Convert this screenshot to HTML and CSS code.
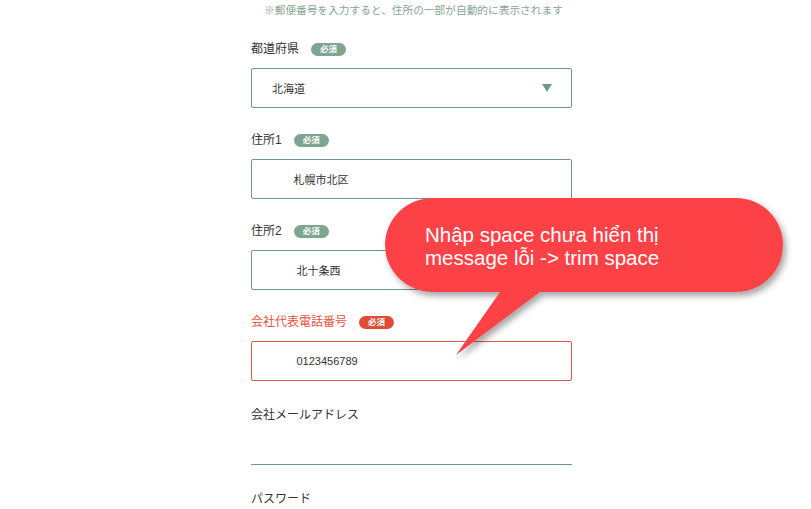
FILE: index.html
```html
<!DOCTYPE html>
<html lang="ja">
<head>
  <meta charset="UTF-8">
  <meta name="viewport" content="width=device-width, initial-scale=1.0">
  <title>会社情報の登録</title>
  <link rel="stylesheet" href="styles.css">
</head>
<body>
  <form class="form">
    <p class="hint">※郵便番号を入力すると、住所の一部が自動的に表示されます</p>

    <div class="field">
      <div class="label-row"><span class="label">都道府県</span><span class="badge">必須</span></div>
      <div class="select">
        <span>北海道</span>
        <span class="arrow"></span>
      </div>
    </div>

    <div class="field">
      <div class="label-row"><span class="label">住所1</span><span class="badge">必須</span></div>
      <input class="input" type="text" value="       札幌市北区">
    </div>

    <div class="field">
      <div class="label-row"><span class="label">住所2</span><span class="badge">必須</span></div>
      <input class="input" type="text" value="        北十条西">
    </div>

    <div class="field error">
      <div class="label-row"><span class="label">会社代表電話番号</span><span class="badge">必須</span></div>
      <input class="input" type="text" value="        0123456789">
    </div>

    <div class="field mail">
      <div class="label-row"><span class="label">会社メールアドレス</span></div>
      <input class="input line" type="text" value="">
    </div>

    <div class="field">
      <div class="label-row"><span class="label">パスワード</span></div>
    </div>
  </form>

  <!-- 注釈の吹き出し -->
  <svg class="callout" width="420" height="180" viewBox="380 190 420 180">
    <defs>
      <filter id="shadow" x="-10%" y="-20%" width="130%" height="150%">
        <feDropShadow dx="3" dy="4" stdDeviation="3" flood-color="#000" flood-opacity="0.35"/>
      </filter>
    </defs>
    <path filter="url(#shadow)" fill="#fd4346"
      d="M433 198 H736 A47 47 0 0 1 736 292 H540 L456 355 L500 292 H433 A48 47 0 0 1 433 198 Z"/>
    <text x="425" y="242" class="callout-text">Nhập space chưa hiển thị</text>
    <text x="425" y="265" class="callout-text">message lỗi -&gt; trim space</text>
  </svg>
</body>
</html>
```

FILE: styles.css
```css
body { margin: 0; background: #fff; font-family: "Liberation Sans", "Noto Sans CJK JP", sans-serif; color: #333; }
.form { margin-left: 251px; width: 321px; }
.hint { margin: 0 0 18px 13px; font-size: 10.7px; line-height: 20px; color: #86a394; white-space: nowrap; }
.field { margin-bottom: 21px; }
.label-row { display: flex; align-items: center; gap: 12px; height: 20px; padding-top: 1px; margin-bottom: 9px; }
.label { font-size: 12px; line-height: 20px; }
.badge { display: inline-block; width: 35px; height: 13px; line-height: 13px; border-radius: 7px; background: #7ea58f; color: #fff; font-size: 8.5px; font-weight: bold; text-align: center; }
.select { display: flex; align-items: center; justify-content: space-between; box-sizing: border-box; height: 40px; padding: 0 19px 0 20px; border: 1px solid #6f9686; border-radius: 2px; font-size: 11px; }
.arrow { width: 0; height: 0; border-left: 5px solid transparent; border-right: 5px solid transparent; border-top: 8px solid #6f9c88; }
.input { display: block; box-sizing: border-box; width: 100%; height: 40px; padding: 0 0 0 20px; border: 1px solid #6f9686; border-radius: 2px; font-family: inherit; font-size: 11px; color: #333; white-space: pre; outline: none; }
.mail { padding-top: 2px; margin-bottom: 23px; }
.input.line { height: 31px; border: none; border-bottom: 1px solid #6f9686; border-radius: 0; }
.error .label { color: #e8523e; }
.error .badge { background: #e04b37; }
.error .input { border-color: #e3574a; }
.callout { position: absolute; left: 380px; top: 190px; }
.callout-text { fill: #fff; font-family: "Liberation Sans", Arial, sans-serif; font-size: 20.5px; }
```
